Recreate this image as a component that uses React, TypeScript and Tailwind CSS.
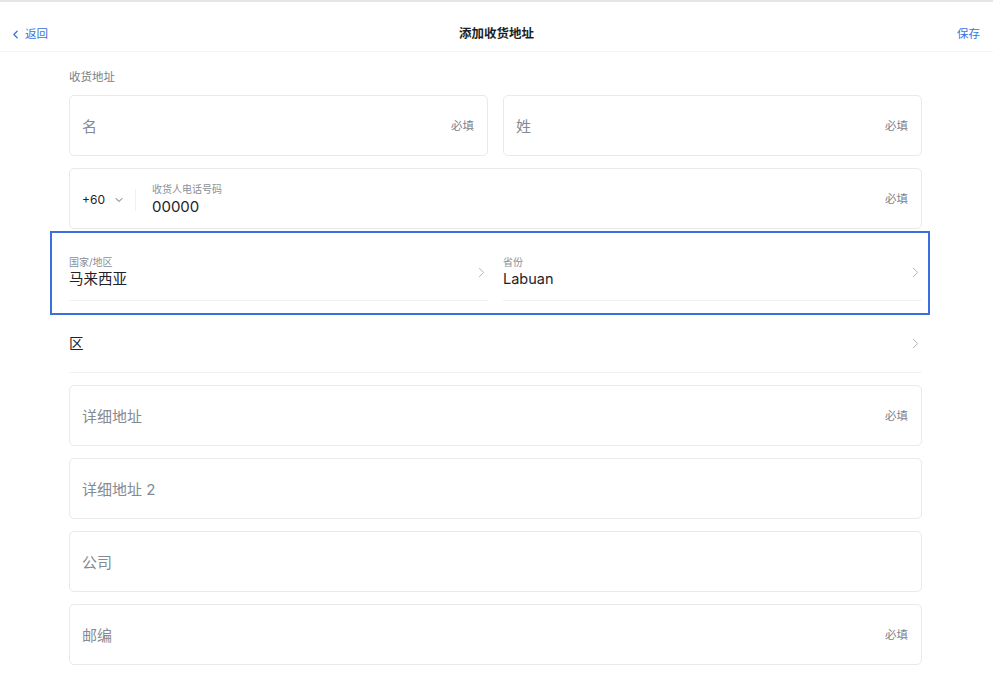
import { ChevronLeft, ChevronRight, ChevronDown } from 'lucide-react';

const font = { fontFamily: 'Inter, "Noto Sans CJK SC", sans-serif' };

function InputBox({ placeholder, required }: { placeholder: string; required?: boolean }) {
  return (
    <div className="flex h-[61px] items-center justify-between rounded-[5px] border border-[#e8e9ec] bg-white pt-[3px] pl-3 pr-[13px]">
      <span className="text-[15px] text-[#858a93]">{placeholder}</span>
      {required && <span className="text-[11.5px] text-[#7d828b]">必填</span>}
    </div>
  );
}

function SelectRow({ label, value }: { label: string; value: string }) {
  return (
    <div className="flex h-[60px] items-center justify-between border-b border-[#f1f2f4] pt-[3px]">
      <div className="flex flex-col">
        <span className="text-[10px] leading-[14px] text-[#8a8f98]">{label}</span>
        <span className="text-[14.5px] leading-[20px] text-[#1f2329]">{value}</span>
      </div>
      <ChevronRight className="-mr-[2px] h-[17px] w-[17px] text-[#b0b4ba]" strokeWidth={1.4} />
    </div>
  );
}

export default function App() {
  return (
    <div className="min-h-[692px] w-full border-t-2 border-[#e6e6e6] bg-white" style={font}>
      <header className="grid h-[50px] grid-cols-3 items-end border-b border-[#f3f4f5] px-[9px] pb-[9px]">
        <button className="flex items-center gap-[3px] justify-self-start text-[11.5px] leading-4 text-[#3a72e0]">
          <ChevronLeft className="h-[13px] w-[13px]" strokeWidth={2.4} />
          返回
        </button>
        <h1 className="justify-self-center text-[12.5px] font-semibold leading-4 text-[#1c1f23]">添加收货地址</h1>
        <button className="justify-self-end pr-[4px] text-[11.5px] leading-4 text-[#3a72e0]">保存</button>
      </header>

      <main className="ml-[69px] w-[853px] pt-[17px]">
        <p className="mb-[10px] text-[11.5px] leading-4 text-[#7b8089]">收货地址</p>

        <div className="flex flex-col gap-3">
          <div className="grid grid-cols-2 gap-[15px]">
            <InputBox placeholder="名" required />
            <InputBox placeholder="姓" required />
          </div>

          <div className="flex h-[61px] items-center rounded-[5px] border border-[#e8e9ec] bg-white pt-[3px] pl-3 pr-[13px]">
            <div className="flex items-center gap-[8px]">
              <span className="text-[12px] text-[#1f2329]">+60</span>
              <ChevronDown className="h-[12px] w-[12px] text-[#50555d]" strokeWidth={1.75} />
            </div>
            <div className="ml-[10px] mr-4 h-[22px] w-px bg-[#f0f1f3]" />
            <div className="flex flex-1 flex-col">
              <span className="text-[10px] leading-[14px] text-[#8a8f98]">收货人电话号码</span>
              <span className="text-[15px] leading-[22px] text-[#1f2329]">00000</span>
            </div>
            <span className="text-[11.5px] text-[#7d828b]">必填</span>
          </div>

          <div className="relative grid grid-cols-2 gap-[15px]">
            <SelectRow label="国家/地区" value="马来西亚" />
            <SelectRow label="省份" value="Labuan" />
            <div className="pointer-events-none absolute -top-[10px] -bottom-[14px] -left-[19px] -right-[8px] border-2 border-[#3b6fe0]" />
          </div>

          <div className="flex h-[60px] items-center justify-between border-b border-[#f1f2f4] pt-[2px]">
            <span className="text-[14.5px] text-[#1f2329]">区</span>
            <ChevronRight className="-mr-[2px] h-[17px] w-[17px] text-[#b0b4ba]" strokeWidth={1.4} />
          </div>

          <InputBox placeholder="详细地址" required />
          <InputBox placeholder="详细地址 2" />
          <InputBox placeholder="公司" />
          <InputBox placeholder="邮编" required />
        </div>
      </main>
    </div>
  );
}
